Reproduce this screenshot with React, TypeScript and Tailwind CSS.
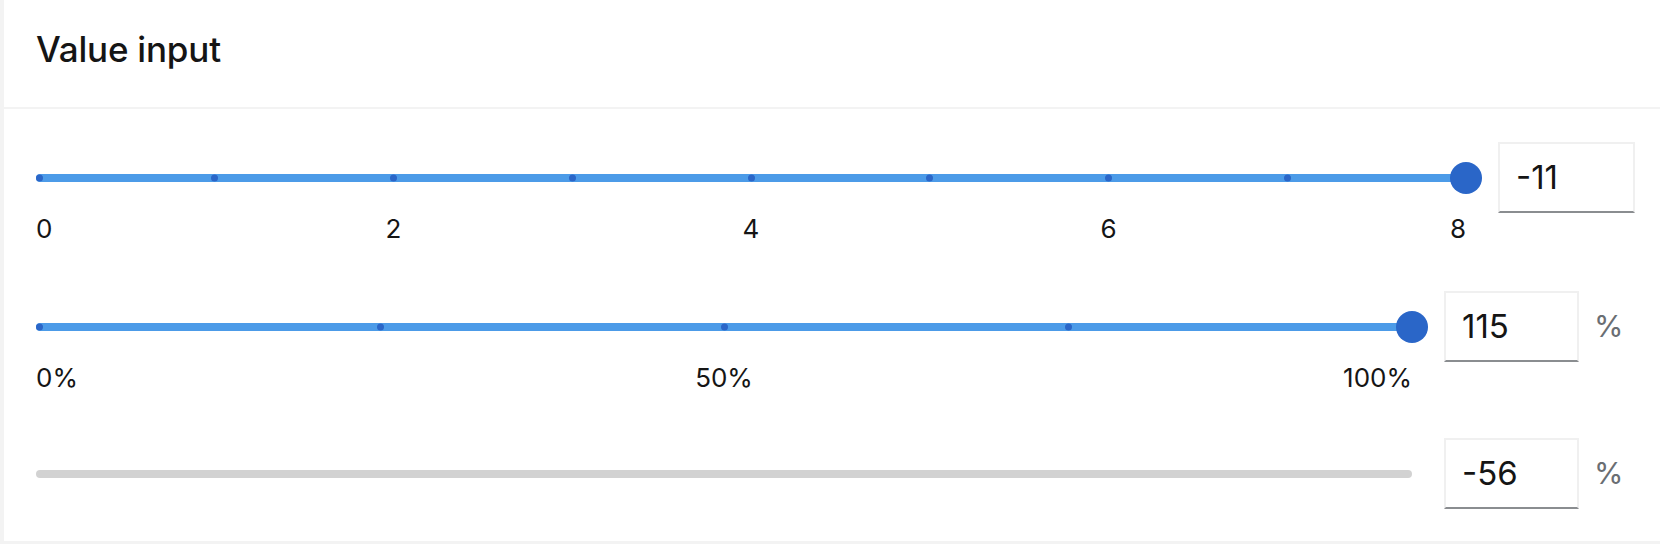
import React from "react";

type Step = { value: number; label?: string };

function Slider({
  steps,
  max,
  value,
  active,
}: {
  steps: Step[];
  max: number;
  value: number | null;
  active: boolean;
}) {
  return (
    <div className="flex-1 min-w-0">
      <div className="relative h-[71px]">
        <div
          className={
            "absolute left-0 right-0 top-1/2 -translate-y-1/2 h-[8px] rounded-full " +
            (active ? "bg-[#4c9be8]" : "bg-[#d2d2d2]")
          }
        />
        {active &&
          steps.map((s, i) => {
            const pct = (s.value / max) * 100;
            return (
              <div
                key={i}
                className={
                  "absolute top-1/2 -translate-y-1/2 w-[7px] h-[7px] rounded-full bg-[#2b66c8] " +
                  (i === 0 ? "" : "-ml-[3.5px]")
                }
                style={{ left: `${pct}%` }}
              />
            );
          })}
        {active && value !== null && (
          <div
            className="absolute top-1/2 -translate-y-1/2 -ml-[16px] w-[32px] h-[32px] rounded-full bg-[#2a66c8]"
            style={{ left: `${(value / max) * 100}%` }}
          />
        )}
      </div>
      {active && (
        <div className="relative mt-[1px] h-[30px]">
          {steps
            .filter((s) => s.label !== undefined)
            .map((s, i, arr) => {
              const pct = (s.value / max) * 100;
              const isFirst = i === 0;
              const isLast = i === arr.length - 1;
              return (
                <span
                  key={i}
                  className={
                    "absolute top-0 text-[26px] leading-[30px] text-[#151515] whitespace-nowrap " +
                    (isFirst ? "" : isLast ? "-translate-x-full" : "-translate-x-1/2")
                  }
                  style={{ left: `${pct}%` }}
                >
                  {s.label}
                </span>
              );
            })}
        </div>
      )}
    </div>
  );
}

function ValueBox({ value, wide }: { value: string; wide?: boolean }) {
  return (
    <div
      className={
        "h-[71px] flex items-center pl-[16px] border-2 border-[#f0f0f0] border-b-[#8a8d90] bg-white text-[33px] text-[#151515] " +
        (wide ? "w-[137px]" : "w-[135px]")
      }
    >
      {value}
    </div>
  );
}

function Unit() {
  return (
    <div className="w-[56px] h-[71px] flex items-center pl-[15px] text-[30px] text-[#6a6e73]">
      %
    </div>
  );
}

export default function App() {
  const steps1: Step[] = [
    { value: 0, label: "0" },
    { value: 1 },
    { value: 2, label: "2" },
    { value: 3 },
    { value: 4, label: "4" },
    { value: 5 },
    { value: 6, label: "6" },
    { value: 7 },
    { value: 8, label: "8" },
  ];
  const steps2: Step[] = [
    { value: 0, label: "0%" },
    { value: 25 },
    { value: 50, label: "50%" },
    { value: 75 },
    { value: 100, label: "100%" },
  ];

  return (
    <div
      className="w-[1660px] h-[544px] bg-[#f3f3f3] overflow-hidden"
      style={{ fontFamily: "Inter, 'Noto Sans', 'Liberation Sans', sans-serif" }}
    >
      <div className="ml-[4px] h-[541px] bg-white flex flex-col">
        <div className="h-[109px] border-b-2 border-[#f3f3f3] pl-[32px] pt-[28px]">
          <h1 className="text-[35px] leading-[42px] font-medium text-[#151515] tracking-[-0.2px]">
            Value input
          </h1>
        </div>
        <div className="pl-[32px] pr-[25px] pt-[33px] flex flex-col">
          <div className="h-[149px] flex items-start gap-[32px]">
            <Slider steps={steps1} max={8} value={8} active />
            <ValueBox value="-11" wide />
          </div>
          <div className="h-[147px] flex items-start">
            <Slider steps={steps2} max={100} value={100} active />
            <div className="ml-[32px] flex items-start">
              <ValueBox value="115" />
              <Unit />
            </div>
          </div>
          <div className="h-[71px] flex items-start">
            <Slider steps={[]} max={100} value={null} active={false} />
            <div className="ml-[32px] flex items-start">
              <ValueBox value="-56" />
              <Unit />
            </div>
          </div>
        </div>
      </div>
    </div>
  );
}
